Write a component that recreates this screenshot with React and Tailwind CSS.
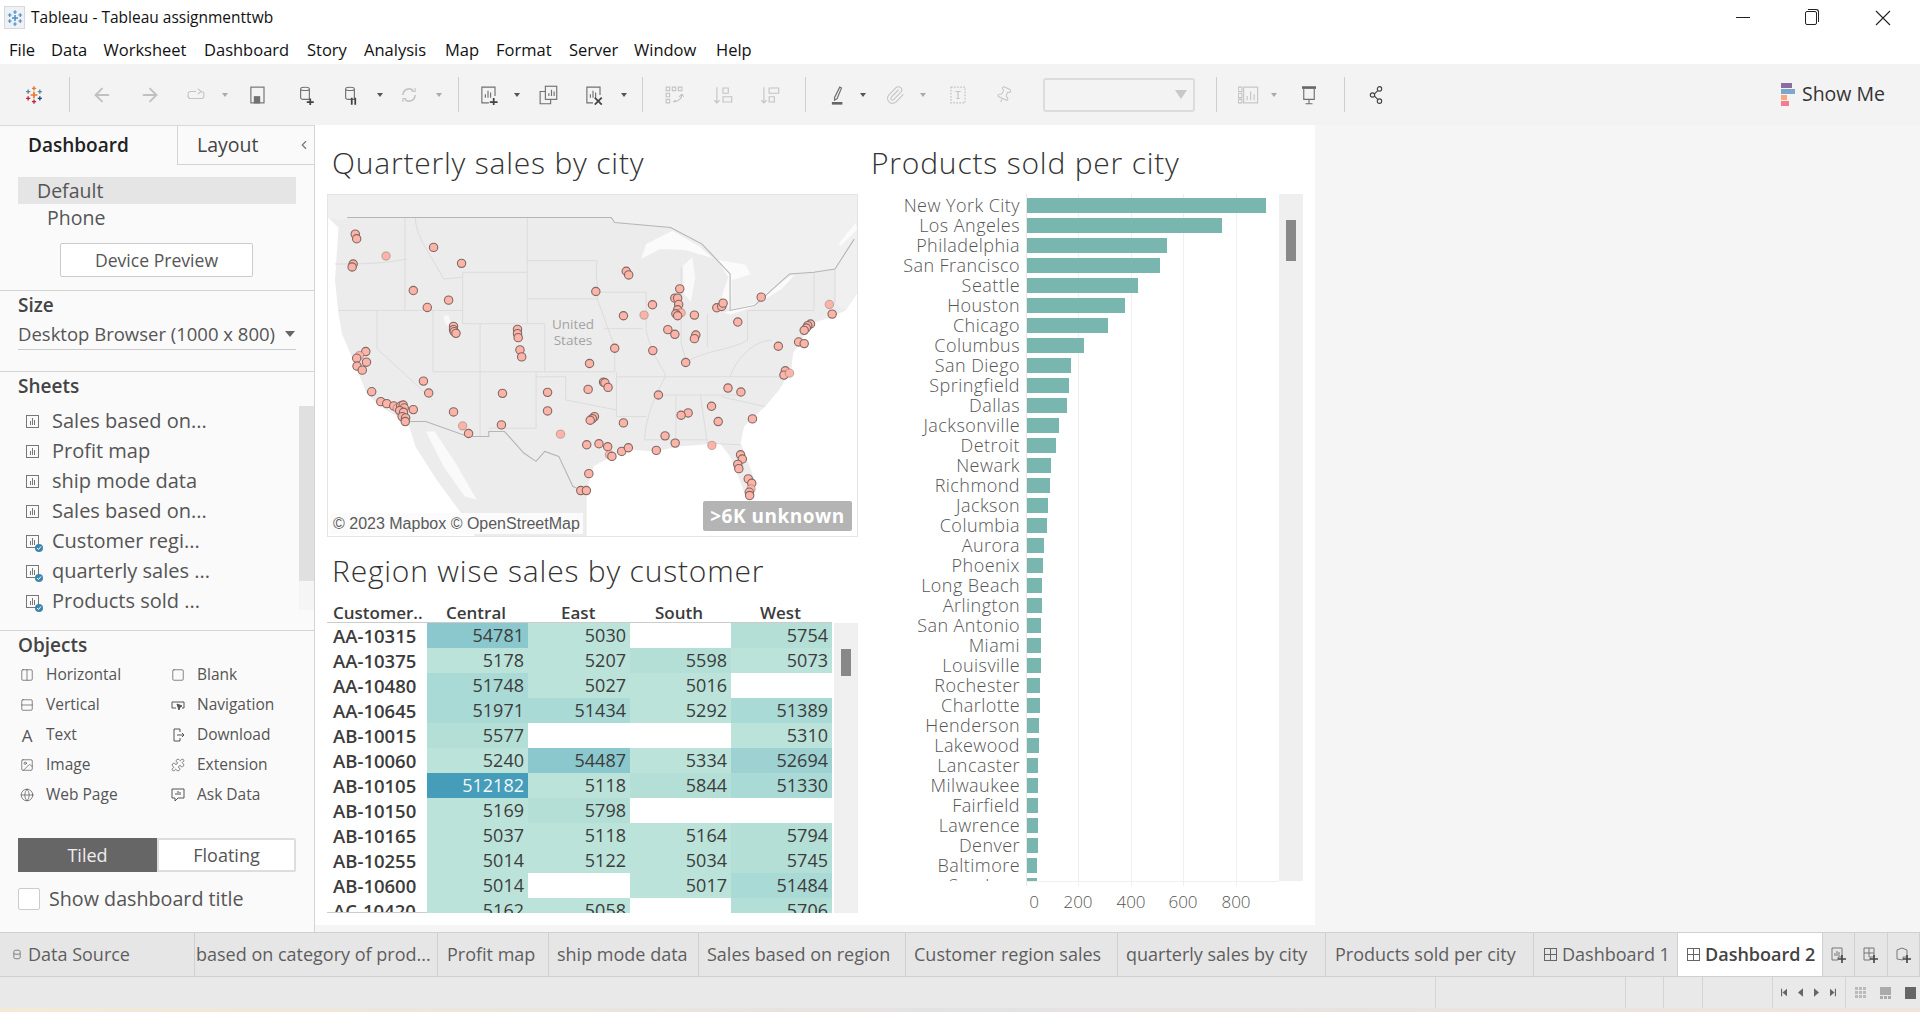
import React from "react";
import { ArrowLeft, ArrowRight, Columns2, Rows2, Image, Globe, Square, Puzzle, Paperclip, Pin, ChevronLeft } from "lucide-react";

const cities = [
  ["New York City", "w-[239px]"], ["Los Angeles", "w-[195px]"], ["Philadelphia", "w-[140px]"], ["San Francisco", "w-[133px]"],
  ["Seattle", "w-[111px]"], ["Houston", "w-[98px]"], ["Chicago", "w-[81px]"], ["Columbus", "w-[57px]"], ["San Diego", "w-[44px]"],
  ["Springfield", "w-[42px]"], ["Dallas", "w-[40px]"], ["Jacksonville", "w-[32px]"], ["Detroit", "w-[29px]"], ["Newark", "w-[24px]"],
  ["Richmond", "w-[23px]"], ["Jackson", "w-[21px]"], ["Columbia", "w-[20px]"], ["Aurora", "w-[17px]"], ["Phoenix", "w-[16px]"],
  ["Long Beach", "w-[15px]"], ["Arlington", "w-[15px]"], ["San Antonio", "w-[14px]"], ["Miami", "w-[14px]"], ["Louisville", "w-[14px]"],
  ["Rochester", "w-[13px]"], ["Charlotte", "w-[13px]"], ["Henderson", "w-[12px]"], ["Lakewood", "w-[12px]"], ["Lancaster", "w-[11px]"],
  ["Milwaukee", "w-[11px]"], ["Fairfield", "w-[11px]"], ["Lawrence", "w-[11px]"], ["Denver", "w-[11px]"], ["Baltimore", "w-[10px]"], ["San Jose", "w-[10px]"],
];

const customers = [
  ["AA-10315", 54781, 5030, null, 5754],
  ["AA-10375", 5178, 5207, 5598, 5073],
  ["AA-10480", 51748, 5027, 5016, null],
  ["AA-10645", 51971, 51434, 5292, 51389],
  ["AB-10015", 5577, null, null, 5310],
  ["AB-10060", 5240, 54487, 5334, 52694],
  ["AB-10105", 512182, 5118, 5844, 51330],
  ["AB-10150", 5169, 5798, null, null],
  ["AB-10165", 5037, 5118, 5164, 5794],
  ["AB-10255", 5014, 5122, 5034, 5745],
  ["AB-10600", 5014, null, 5017, 51484],
  ["AC-10420", 5162, 5058, null, 5706],
];

const dots = [
  [98,160],[102,174],[92,250],[89,259],[186,226],[322,200],[402,248],[264,330],[365,359],[304,381],[379,438],[379,448],[381,454],[386,459],
  [128,514],[110,526],[102,534],[130,546],[103,558],[118,570],[293,603],[145,635],[308,639],[171,665],[188,671],[208,678],[218,685],[228,678],
  [235,675],[238,684],[225,692],[236,697],[264,689],[232,710],[242,714],[241,725],[379,696],[405,738],[422,761],[519,640],[516,735],[562,447],
  [562,460],[564,472],[569,509],[574,530],[648,637],[648,693],[685,763],[764,628],[768,550],[808,606],[812,608],[821,622],[840,504],[786,333],
  [873,272],[880,283],[865,406],[924,404],[948,373],[949,511],[992,448],[1012,462],[1043,547],[1026,325],[1012,353],[1020,353],[1023,372],
  [1020,388],[1030,397],[1015,400],[1020,406],[1068,404],[1072,464],[1068,475],[1132,382],[1146,378],[1150,368],[1192,425],[1259,350],[1454,372],
  [1462,401],[1400,431],[1392,436],[1388,443],[1382,450],[1366,485],[1382,490],[1308,498],[1328,572],[1324,585],[1340,579],[1164,624],[1201,636],
  [965,645],[1117,679],[1136,725],[1050,699],[1030,706],[1234,717],[984,768],[1013,790],[1118,797],[959,812],[865,729],[782,710],[776,716],[770,721],
  [760,795],[795,792],[820,801],[860,815],[879,804],[825,825],[832,830],[766,882],[743,933],[759,933],[1200,825],[1205,838],[1192,854],[1195,867],
  [1222,898],[1232,911],[1230,928],[1225,938],[1226,948],
];

const stateLines = [
  "M240 110V390", "M50 390H405", "M405 275V430", "M405 275H590", "M405 430H640", "M590 110V430", "M590 240H790", "M590 355H790",
  "M320 390V575", "M160 390V505L320 660", "M320 575H840", "M455 430V770", "M615 575V745", "M640 430V575", "M480 745H615", "M615 590H700V660L845 690",
  "M845 575V710H930", "M790 335H930", "M810 445H920", "M840 500V575", "M930 335V450", "M1030 260V490", "M1105 400V500", "M1220 390V480",
  "M1220 390H1410", "M845 590H1320", "M975 645H1200", "M1015 645V780", "M1085 645L1105 790", "M925 780H1105", "M1105 790L1200 795", "M1145 650L1270 680",
  "M790 240C780 300 800 330 790 355L840 500", "M270 110C270 170 320 230 350 295L405 290", "M930 450C950 540 980 560 985 590", "M985 590C960 640 930 700 925 780",
  "M1030 490L1045 545C1100 510 1170 510 1220 480", "M1170 590C1190 530 1240 480 1290 480", "M1410 275V390", "M1470 265V370", "M40 250C100 250 180 250 245 235",
];

function tone(v) {
  if (v > 500000) return "bg-[#459db9] text-[#f2f7f9]";
  if (v > 54000) return "bg-[#8bc8cd] text-[#3c3c3c]";
  if (v > 52000) return "bg-[#9dd1d2] text-[#3c3c3c]";
  if (v > 51000) return "bg-[#aadad5] text-[#3c3c3c]";
  if (v > 5500) return "bg-[#b4dfd6] text-[#3c3c3c]";
  return "bg-[#bbe3da] text-[#3c3c3c]";
}

const Plus = ({ x, y, s, c, w = 2 }) => (
  <path d={`M${x - s} ${y}H${x + s}M${x} ${y - s}V${y + s}`} stroke={c} strokeWidth={w} fill="none" />
);

const TableauLogo = ({ colors, className }) => (
  <svg viewBox="0 0 24 24" className={className}>
    <Plus x={12} y={12} s={4} c={colors[0]} />
    <Plus x={12} y={4} s={2.5} c={colors[0]} w={1.6} />
    <Plus x={12} y={20} s={2.5} c={colors[2]} w={1.6} />
    <Plus x={5} y={8} s={2.5} c={colors[1]} w={1.6} />
    <Plus x={19} y={8} s={2.5} c={colors[1]} w={1.6} />
    <Plus x={5} y={16} s={2.5} c={colors[2]} w={1.6} />
    <Plus x={19} y={16} s={2.5} c={colors[3]} w={1.6} />
  </svg>
);

const Ico = ({ className, children, stroke = "#707070" }) => (
  <svg viewBox="0 0 24 24" fill="none" stroke={stroke} strokeWidth="1.300" className={`w-6 h-6 p-[1.500px] shrink-0 ${className}`}>
    {children}
  </svg>
);

const Caret = ({ className, dark }) => (
  <span className={`w-2 flex justify-center shrink-0 ${className}`}>
    <span className={`w-0 h-0 border-l-[3px] border-r-[3px] border-t-[4px] border-l-transparent border-r-transparent ${dark ? "border-t-[#555]" : "border-t-[#aaa]"}`} />
  </span>
);

const Sep = ({ className }) => <span className={`w-px h-[35px] bg-[#cfcfcf] shrink-0 ${className}`} />;

const Cylinder = () => (
  <path d="M7 5C7 2.500 17 2.500 17 5V17H12C9 17 7 17 7 15ZM7 5C7 7.500 17 7.500 17 5" />
);

const Bars = () => <path d="M9 15V11M12 15V7M15 15V9" />;

function Toolbar() {
  return (
    <div className="h-[61px] bg-[#f3f3f3] flex items-center pl-[22px] pr-[35px] shrink-0">
      <TableauLogo className="w-6 h-6 p-[2px] shrink-0" colors={["#e8762c", "#5b879b", "#c72037", "#1f447d"]} />
      <Sep className="ml-[23px]" />
      <ArrowLeft size={22} color="#c0c0c0" strokeWidth={2} className="ml-[21px] mr-[1px] shrink-0" />
      <ArrowRight size={22} color="#c0c0c0" strokeWidth={2} className="ml-[25px] mr-[1px] shrink-0" />
      <Ico className="ml-[22px]" stroke="#c4c4c4"><path d="M12 8H6C4 8 3 9 3 11V13C3 15 4 16 6 16H17C20 16 21 15 21 13V11C21 9 20 8 17 8M14 5L18 8L14 11" /></Ico>
      <Caret className="ml-[13px]" />
      <Ico className="ml-[16px]"><rect x="5" y="3" width="15" height="18" /><rect x="9" y="14" width="6" height="7" fill="#707070" /></Ico>
      <Ico className="ml-[24px]"><Cylinder /><path d="M14 20H22M18 16V24" stroke="#444" strokeWidth="2" /></Ico>
      <Ico className="ml-[21px]"><Cylinder /><path d="M14 15V23M18 15V23" stroke="#444" strokeWidth="2" /></Ico>
      <Caret className="ml-[14px]" dark />
      <Ico className="ml-[13px]" stroke="#c4c4c4"><path d="M5 12C5 8 8 5 12 5C14 5 16 6 17 7M19 12C19 16 16 19 12 19C10 19 8 18 7 17" strokeWidth="1.800" /><path d="M15 8H19V4M9 16H5V20" /></Ico>
      <Caret className="ml-[14px]" />
      <Sep className="ml-[15px]" />
      <Ico className="ml-[17px]"><path d="M20 13V3H5V21H13" /><Bars /><path d="M14 20H23M18.500 15.500V24" stroke="#444" strokeWidth="2" /></Ico>
      <Caret className="ml-[13px]" dark />
      <Ico className="ml-[15px]"><rect x="9" y="2" width="13" height="15" /><path d="M13 13V10M16 13V6M19 13V8" /><path d="M9 8H3V22H15V17" /></Ico>
      <Ico className="ml-[21px]"><path d="M20 12V3H5V21H12" /><Bars /><path d="M14 15L22 23M22 15L14 23" stroke="#444" strokeWidth="2" /></Ico>
      <Caret className="ml-[15px]" dark />
      <Sep className="ml-[14px]" />
      <Ico className="ml-[19px]" stroke="#c4c4c4"><path d="M3 3H7V7H3ZM10 3H14V7H10ZM17 3H21V7H17ZM3 10H7V14H3ZM3 17H7V21H3Z" /><path d="M21 11C21 16 17 20 11 20M21 11L18 14M21 11L23 14M11 20L14 18" /></Ico>
      <Ico className="ml-[25px]" stroke="#c4c4c4"><path d="M5 3V21M2 18L5 21L8 18" /><path d="M12 4H18V10H12ZM12 14H22V20H12Z" /></Ico>
      <Ico className="ml-[23px]" stroke="#c4c4c4"><path d="M5 3V21M2 18L5 21L8 18" /><path d="M11 4H22V10H11ZM11 14H17V20H11Z" /></Ico>
      <Sep className="ml-[23px]" />
      <Ico className="ml-[20px]"><path d="M8 15L14 3L16 4L11 16L8 18Z" /><rect x="5" y="20" width="12" height="3" fill="#666" stroke="none" /></Ico>
      <Caret className="ml-[9px]" dark />
      <Paperclip size={20} color="#c4c4c4" strokeWidth={1.3} className="ml-[18px] mr-[2px] shrink-0" />
      <Caret className="ml-[12px]" />
      <Ico className="ml-[19px]" stroke="#c4c4c4"><rect x="4" y="3" width="16" height="18" strokeDasharray="2 1.500" /><path d="M9 8H15M12 8V16M10 16H14" /></Ico>
      <Pin size={18} color="#c4c4c4" strokeWidth={1.3} className="ml-[25px] mr-[3px] shrink-0 rotate-[25deg]" />
      <div className="ml-[27px] w-[152px] h-[34px] border-2 border-[#dcdcdc] rounded-[3px] bg-[#f3f3f3] flex items-center justify-end pr-[6px] shrink-0">
        <span className="w-0 h-0 border-l-[6px] border-r-[6px] border-t-[9px] border-l-transparent border-r-transparent border-t-[#c8c8c8]" />
      </div>
      <Sep className="ml-[21px]" />
      <Ico className="ml-[19px]" stroke="#c4c4c4"><rect x="7" y="3" width="16" height="18" /><path d="M1 3H5V8H1ZM1 10H5V15H1ZM1 17H5V21H1Z" /><path d="M11 18V13M15 18V8M19 18V11" /></Ico>
      <Caret className="ml-[10px]" />
      <Ico className="ml-[19px]"><path d="M6 5V17H18V5M12 17V22M8 22H16" /><rect x="4" y="2" width="16" height="3" fill="#666" stroke="none" /></Ico>
      <Sep className="ml-[23px]" />
      <Ico className="ml-[19px]" stroke="#444"><circle cx="16" cy="5" r="2.500" /><circle cx="8" cy="12" r="2.500" /><circle cx="16" cy="19" r="2.500" /><path d="M10 11L14 7M10 13L14 17" /></Ico>
      <div className="ml-auto flex items-center -mt-[1px]">
        <span className="flex flex-col gap-[1px] w-[14px]">
          <span className="h-[5px] w-[11px] bg-[#8c6d9f]" />
          <span className="h-[5px] w-[14px] bg-[#7ba7cc]" />
          <span className="h-[5px] w-[6px] bg-[#f6a97f]" />
          <span className="h-[5px] w-[8px] bg-[#f47c8c]" />
        </span>
        <span className="ml-[7px] text-[19.500px] text-[#333]">Show Me</span>
      </div>
    </div>
  );
}

const SheetIcon = ({ done }) => (
  <span className="relative w-[13px] h-[13px] border border-[#777] flex items-end justify-center gap-[1px] pb-[2px] shrink-0">
    <span className="w-px h-[4px] bg-[#777]" />
    <span className="w-px h-[7px] bg-[#777]" />
    <span className="w-px h-[5px] bg-[#777]" />
    {done && (
      <span className="absolute -right-[5px] -bottom-[5px] w-[8px] h-[8px] rounded-full bg-[#3d85ad] flex items-center justify-center">
        <svg viewBox="0 0 8 8" className="w-[8px] h-[8px]" fill="none" stroke="#fff" strokeWidth="1"><path d="M2 4L3.500 5.500L6 2.500" /></svg>
      </span>
    )}
  </span>
);

const ObjectItem = ({ icon, label }) => (
  <div className="flex items-center h-[30px]">
    <span className="w-[14px] h-[14px] flex items-center justify-center text-[#555] shrink-0">{icon}</span>
    <span className="ml-[12px] text-[15.500px] text-[#555]">{label}</span>
  </div>
);

function Sidebar() {
  const small = { size: 14, strokeWidth: 1.2 };
  return (
    <aside className="w-[315px] h-full bg-[#fafafa] border-r border-[#d4d4d4] border-t border-t-[#d9d9d9] shrink-0 flex flex-col text-[#555]">
      <div className="flex h-[39px] shrink-0">
        <div className="w-[177px] pl-[28px] flex items-center text-[19px] font-semibold text-[#222]">Dashboard</div>
        <div className="flex-1 border-l border-b border-[#d4d4d4] flex items-center pl-[19px] text-[19.500px] text-[#444] relative">
          Layout
          <ChevronLeft size={14} color="#777" className="absolute right-[3px] top-[12px]" />
        </div>
      </div>
      <div className="mt-[12px] mx-[18px] h-[27px] bg-[#e5e5e5] pl-[19px] flex items-center text-[19.500px]">Default</div>
      <div className="mx-[18px] h-[27px] pl-[29px] flex items-center text-[19.500px]">Phone</div>
      <button className="mt-[12px] ml-[60px] w-[193px] h-[34px] bg-white border border-[#ccc] rounded-[2px] text-[17.600px] text-[#555]">Device Preview</button>
      <div className="mt-[13px] border-t border-[#d4d4d4] px-[18px] h-[81px] shrink-0">
        <div className="pt-[1px] text-[19px] font-semibold text-[#444] leading-[26px]">Size</div>
        <div className="mt-[1px] h-[31px] border-b border-[#ccc] flex items-center justify-between text-[18.500px]">
          <span>Desktop Browser (1000 x 800)</span>
          <span className="mr-[1px] w-0 h-0 border-l-[5px] border-r-[5px] border-t-[6px] border-l-transparent border-r-transparent border-t-[#666]" />
        </div>
      </div>
      <div className="border-t border-[#d4d4d4] h-[259px] shrink-0 flex flex-col">
        <div className="pl-[18px] pt-[1px] text-[19px] font-semibold text-[#444] leading-[26px]">Sheets</div>
        <div className="mt-[7px] flex relative">
          <div className="flex-1 pl-[26px]">
            {[["Sales based on...", 0], ["Profit map", 0], ["ship mode data", 0], ["Sales based on...", 0], ["Customer regi...", 1], ["quarterly sales ...", 1], ["Products sold ...", 1]].map(([name, done], i) => (
              <div key={i} className="h-[30px] flex items-center">
                <SheetIcon done={!!done} />
                <span className="ml-[13px] text-[20px]">{name}</span>
              </div>
            ))}
          </div>
          <div className="w-[15px] h-[204px] bg-[#f5f5f5]"><div className="h-[175px] bg-[#e0e0e0]" /></div>
        </div>
      </div>
      <div className="border-t border-[#d4d4d4] flex-1 px-[20px] relative">
        <div className="-ml-[2px] pt-[1px] text-[19px] font-semibold text-[#444] leading-[26px]">Objects</div>
        <div className="mt-[2px] grid grid-cols-[151px_1fr]">
          <ObjectItem icon={<Columns2 {...small} />} label="Horizontal" />
          <ObjectItem icon={<Square {...small} />} label="Blank" />
          <ObjectItem icon={<Rows2 {...small} />} label="Vertical" />
          <ObjectItem icon={<svg viewBox="0 0 14 14" className="w-[14px] h-[14px]" fill="none" stroke="#555" strokeWidth="1"><path d="M5 10H1V4H13V10H11" /><path d="M6 6L11 8L9 9L8 12Z" fill="#555" /></svg>} label="Navigation" />
          <ObjectItem icon={<span className="text-[17px] leading-none">A</span>} label="Text" />
          <ObjectItem icon={<svg viewBox="0 0 14 14" className="w-[14px] h-[14px]" fill="none" stroke="#555" strokeWidth="1"><path d="M9 4V1H3V13H9V10M6 7H13M11 5L13 7L11 9" /></svg>} label="Download" />
          <ObjectItem icon={<Image {...small} />} label="Image" />
          <ObjectItem icon={<Puzzle {...small} />} label="Extension" />
          <ObjectItem icon={<Globe {...small} />} label="Web Page" />
          <ObjectItem icon={<svg viewBox="0 0 14 14" className="w-[14px] h-[14px]" fill="none" stroke="#555" strokeWidth="1"><path d="M1 1H13V10H7L4 13V10H1ZM5 7V5M7 7V3M9 7V4" /></svg>} label="Ask Data" />
        </div>
        <div className="mt-[28px] -ml-[2px] flex h-[34px] w-[278px]">
          <div className="w-[139px] bg-[#666] text-[#eee] flex items-center justify-center text-[18px]">Tiled</div>
          <div className="w-[139px] bg-white border-2 border-[#ddd] rounded-r-[2px] flex items-center justify-center text-[18px]">Floating</div>
        </div>
        <label className="mt-[12px] -ml-[2px] flex items-center">
          <span className="w-[22px] h-[22px] bg-white border border-[#ccc] rounded-[2px]" />
          <span className="ml-[9px] text-[19.700px]">Show dashboard title</span>
        </label>
      </div>
    </aside>
  );
}

function MapView() {
  return (
    <div className="relative w-[531px] h-[343px] border border-[#e4e4e4] bg-white overflow-hidden shrink-0">
      <svg viewBox="20 42 1513 1028" preserveAspectRatio="none" className="w-full h-full block">
        <path d="M20 42H1533V340L1500 390L1460 410L1400 430L1380 470L1350 520L1345 570L1310 630L1270 680L1210 740L1200 790L1215 830L1240 900L1235 950L1215 950L1190 880L1170 830L1140 790L1090 795L1020 800L960 815L880 810L830 830L780 860L760 930L760 1070H440L400 1000L330 900L270 800L250 730L170 680L130 640L100 560L60 460L50 400L40 300L50 140L20 110Z" fill="#ececec" />
        <path d="M20 42H830V110H75L60 120L20 110ZM830 42H1533V340L1500 390L1470 370V265L1340 280L1240 375L1170 390V280L1090 190L1000 140L840 125L830 110Z" fill="#f0f0f0" />
        <path d="M300 755L325 755L385 850L445 960L410 950L350 860Z" fill="#fafafa" />
        <path d="M930 190L1005 150L1080 195L1120 232L1040 208L970 205L915 235Z" fill="#fbfbfb" />
        <path d="M1035 255L1062 230L1070 290L1058 365L1038 340Z" fill="#f9f9f9" />
        <path d="M1135 238L1215 252L1228 282L1175 298L1172 392L1145 350L1165 290Z" fill="#fbfbfb" />
        <path d="M1152 396L1250 366L1245 376L1170 403Z" fill="#fbfbfb" />
        <path d="M1258 350L1340 288L1356 282L1318 325L1270 356Z" fill="#fbfbfb" />
        <path d="M1530 125L1480 190L1488 194L1533 145Z" fill="#fbfbfb" />
        <path d="M350 405L365 405L375 445L355 430Z" fill="#f8f8f8" />
        <g fill="none" stroke="#dcdcdc" strokeWidth="1">
          {stateLines.map((d, i) => <path key={i} d={d} vectorEffect="non-scaling-stroke" />)}
        </g>
        <path d="M75 110H830L840 125L1000 140L1090 190L1170 280L1170 390L1240 375L1340 280L1410 275L1470 265L1525 175" fill="none" stroke="#b5b5b5" strokeWidth="1.100" vectorEffect="non-scaling-stroke" />
        <path d="M250 725H300L420 770H480V755H525L580 820L615 845L640 815L680 830L720 920L760 940" fill="none" stroke="#b5b5b5" strokeWidth="1.100" vectorEffect="non-scaling-stroke" />
        {dots.map(([x, y], i) => (
          <ellipse key={i} cx={x} cy={y} rx="12" ry="12.500" fill="#fcb4a8" stroke="#7c625e" strokeWidth="1.100" strokeOpacity={i % 11 === 4 ? 0.4 : 0.95} vectorEffect="non-scaling-stroke" />
        ))}
      </svg>
      <div className="absolute left-[205px] top-[121px] w-[80px] text-center text-[13.500px] leading-[16px] text-[#a3a3a3]">United<br />States</div>
      <div className="absolute left-[2px] bottom-[2px] h-[21px] w-[253px] bg-[#fbfbfb] flex items-center pl-[3px] text-[16px] text-[#5a5a5a] font-['Liberation_Sans',sans-serif]">© 2023 Mapbox © OpenStreetMap</div>
      <div className="absolute right-[5px] bottom-[5px] h-[30px] w-[149px] rounded-[2px] bg-[#b4b4b4] flex items-center justify-center text-[19px] font-bold text-white tracking-[0.5px]">&gt;6K unknown</div>
    </div>
  );
}

function CrossTab() {
  return (
    <div className="relative shrink-0">
      <div className="flex h-[24px] pt-[4px] w-[505px] border-b border-[#ccc] text-[17px] font-semibold text-[#3c3c3c] items-center">
        <span className="w-[100px] pl-[6px] whitespace-nowrap">Customer..</span>
        <span className="w-[101px] pl-[19px]">Central</span>
        <span className="w-[102px] pl-[33px]">East</span>
        <span className="w-[101px] pl-[25px]">South</span>
        <span className="w-[101px] pl-[29px]">West</span>
      </div>
      <div className="flex">
        <div className="relative w-[505px] h-[290px] overflow-hidden">
          {customers.map(([id, ...vals]) => (
            <div key={id} className="grid grid-cols-[100px_101px_102px_101px_101px] h-[25px] text-[18px] leading-[25px]">
              <span className="pl-[6px] font-semibold text-[#3c3c3c] text-[18.500px]">{id}</span>
              {vals.map((v, i) => (
                <span key={i} className={`text-right pr-[4px] ${v ? tone(v) : "bg-white"}`}>{v}</span>
              ))}
            </div>
          ))}
          <span className="absolute left-0 bottom-0 w-[100px] h-px bg-[#ccc]" />
        </div>
        <div className="ml-[2px] w-[24px] h-[290px] bg-[#f0f0f0] pt-[26px] pl-[7px]">
          <div className="w-[10px] h-[27px] bg-[#888]" />
        </div>
      </div>
    </div>
  );
}

function BarChart() {
  return (
    <div className="relative h-[715px] w-[443px]">
      <div className="relative h-[692px]">
        <span className="absolute left-[166px] top-0 bottom-0 w-px bg-[#e8e8e8]" />
        <span className="absolute left-[218px] top-0 bottom-0 w-px bg-[#efefef]" />
        <span className="absolute left-[271px] top-0 bottom-0 w-px bg-[#efefef]" />
        <span className="absolute left-[323px] top-0 bottom-0 w-px bg-[#efefef]" />
        <span className="absolute left-[376px] top-0 bottom-0 w-px bg-[#efefef]" />
        <span className="absolute left-[166px] top-[687px] w-[253px] h-px bg-[#efefef]" />
        <div className="relative h-[687px] w-[419px] overflow-hidden pt-[1px]">
          {cities.map(([name, w]) => (
            <div key={name} className="flex items-center h-[20px]">
              <span className="w-[160px] text-right text-[18px] tracking-[0.45px] font-light text-[#555] whitespace-nowrap leading-[20px]">{name}</span>
              <span className={`ml-[7px] h-[15px] bg-[#79b6af] ${w}`} />
            </div>
          ))}
        </div>
        <div className="absolute left-[419px] top-0 w-[24px] h-[687px] bg-[#efefef] pl-[7px] pt-[26px]">
          <div className="w-[10px] h-[41px] bg-[#888]" />
        </div>
      </div>
      <div className="flex pl-[154px] text-[17px] font-light text-[#555] leading-[20px] mt-[6px]">
        <span className="w-[40px] text-center">0</span>
        <span className="ml-[4px] w-[40px] text-center">200</span>
        <span className="ml-[13px] w-[40px] text-center">400</span>
        <span className="ml-[12px] w-[40px] text-center">600</span>
        <span className="ml-[13px] w-[40px] text-center">800</span>
      </div>
    </div>
  );
}

const titleClass = "text-[30px] font-light text-[#333] tracking-[0.8px] leading-[36px]";

function Dashboard() {
  return (
    <div className="flex-1 h-full bg-[#f5f5f5]">
      <div className="w-[1000px] h-[800px] bg-white pl-[12px] flex">
        <div className="w-[533px] flex flex-col">
          <div className={`${titleClass} pl-[5px] h-[69px] pt-[20px] shrink-0`}>Quarterly sales by city</div>
          <MapView />
          <div className={`${titleClass} pl-[5px] h-[62px] pt-[16px] shrink-0`}>Region wise sales by customer</div>
          <CrossTab />
        </div>
        <div className="w-[455px] flex flex-col">
          <div className={`${titleClass} pl-[11px] h-[69px] pt-[20px] shrink-0`}>Products sold per city</div>
          <BarChart />
        </div>
      </div>
    </div>
  );
}

const Tab = ({ w, children, active }) => (
  <div className={`${w} shrink-0 h-full border-r border-[#d0d0d0] flex items-center overflow-hidden whitespace-nowrap text-[18px] ${active ? "bg-white font-semibold text-[#444]" : "text-[#5e5e5e]"}`}>
    {children}
  </div>
);

const DashIcon = () => (
  <span className="mr-[5px] w-[13px] h-[13px] border border-[#666] grid grid-cols-2 shrink-0">
    <span className="border-r border-b border-[#666]" />
    <span className="border-b border-[#666]" />
    <span className="border-r border-[#666]" />
    <span />
  </span>
);

const TabAdd = ({ w, kind }) => (
  <div className={`${w} shrink-0 h-full border-r border-[#d0d0d0] flex items-center justify-center`}>
    <svg viewBox="0 0 18 18" className="w-[18px] h-[18px]" fill="none" stroke="#777" strokeWidth="1">
      {kind === 0 && <path d="M2 2H12V11H8V14H2ZM5 10V7M7 10V5M9 10V6" />}
      {kind === 1 && <path d="M2 2H12V11H8V14H2ZM7 2V11M2 7H12" />}
      {kind === 2 && <path d="M2 4L7 2L12 4V11H8V14L2 13Z" />}
      <path d="M8 13H16M12 9V17" stroke="#444" strokeWidth="1.600" />
    </svg>
  </div>
);

function BottomBars() {
  return (
    <>
      <div className="h-[45px] border-t border-b border-[#d0d0d0] bg-[#e6e6e6] flex shrink-0">
        <Tab w="w-[195px]">
          <svg viewBox="0 0 10 14" className="ml-[13px] mr-[7px] w-[8px] h-[11px]" fill="none" stroke="#666"><path d="M1 3C1 1 9 1 9 3V11C9 13 1 13 1 11ZM1 6C3 7 7 7 9 6" /></svg>
          Data Source
        </Tab>
        <Tab w="w-[243px]"><span className="pl-[1px]">based on category of prod...</span></Tab>
        <Tab w="w-[111px]"><span className="pl-[9px]">Profit map</span></Tab>
        <Tab w="w-[150px]"><span className="pl-[8px]">ship mode data</span></Tab>
        <Tab w="w-[207px]"><span className="pl-[8px]">Sales based on region</span></Tab>
        <Tab w="w-[212px]"><span className="pl-[8px]">Customer region sales</span></Tab>
        <Tab w="w-[208px]"><span className="pl-[8px]">quarterly sales by city</span></Tab>
        <Tab w="w-[208px]"><span className="pl-[9px]">Products sold per city</span></Tab>
        <Tab w="w-[144px]"><span className="pl-[10px]" /><DashIcon />Dashboard 1</Tab>
        <Tab w="w-[145px]" active><span className="pl-[9px]" /><DashIcon />Dashboard 2</Tab>
        <TabAdd w="w-[32px]" kind={0} />
        <TabAdd w="w-[33px]" kind={1} />
        <TabAdd w="w-[32px]" kind={2} />
      </div>
      <div className="h-[31px] bg-[#e9e9e9] flex shrink-0">
        <div className="w-[1436px] border-r border-[#d4d4d4]" />
        <div className="w-[190px] border-r border-[#d4d4d4]" />
        <div className="w-[38px] border-r border-[#d4d4d4]" />
        <div className="w-[39px] border-r border-[#d4d4d4]" />
        <div className="w-[70px] border-r border-[#d4d4d4]" />
        <div className="w-[73px] border-r border-[#d4d4d4] flex items-center gap-[11px] pl-[8px]">
          <svg viewBox="0 0 8 10" className="w-[6px] h-[9px]" fill="#666"><path d="M0 0H1.500V10H0ZM8 0V10L2 5Z" /></svg>
          <svg viewBox="0 0 6 10" className="w-[5px] h-[9px]" fill="#666"><path d="M6 0V10L0 5Z" /></svg>
          <svg viewBox="0 0 6 10" className="w-[5px] h-[9px]" fill="#666"><path d="M0 0V10L6 5Z" /></svg>
          <svg viewBox="0 0 8 10" className="w-[6px] h-[9px]" fill="#666"><path d="M8 0H6.500V10H8ZM0 0V10L6 5Z" /></svg>
        </div>
        <div className="flex-1 flex items-center gap-[14px] pl-[9px]">
          <svg viewBox="0 0 11 12" className="w-[11px] h-[12px]" fill="#bbb"><path d="M0 0H3V3H0ZM4 0H7V3H4ZM8 0H11V3H8ZM0 4H3V7H0ZM4 4H7V7H4ZM8 4H11V7H8ZM0 8H3V11H0ZM4 8H7V11H4ZM8 8H11V11H8Z" /></svg>
          <svg viewBox="0 0 11 12" className="w-[11px] h-[12px]" fill="#aaa"><path d="M0 0H11V8H0ZM0 9H3V12H0ZM4 9H7V12H4ZM8 9H11V12H8Z" /></svg>
          <span className="w-[11px] h-[12px] bg-[#666]" />
        </div>
      </div>
      <div className="h-[4px] bg-linear-to-r from-[#f3ead6] via-[#e4e2e2] to-[#efe4dc] shrink-0" />
    </>
  );
}

export default function App() {
  return (
    <div className="w-[1920px] h-[1012px] overflow-hidden bg-white flex flex-col font-['Open_Sans',sans-serif]">
      <div className="h-[35px] flex items-center pl-[4px] shrink-0">
        <span className="w-[21px] h-[23px] bg-[#eef1f5] border border-[#d8d8d8] flex items-center justify-center">
          <TableauLogo className="w-[18px] h-[18px]" colors={["#4a90c2", "#4a90c2", "#4a90c2", "#4a90c2"]} />
        </span>
        <span className="ml-[6px] text-[15.500px] text-[#111]">Tableau - Tableau assignmenttwb</span>
        <div className="ml-auto flex items-center pr-[29px] text-[#111]">
          <span className="w-[14px] h-px bg-[#222]" />
          <span className="ml-[55px] relative w-[12px] h-[14px] border border-[#222] rounded-[2px] after:absolute after:-top-[3px] after:-right-[3px] after:w-[11px] after:h-[13px] after:border-t after:border-r after:border-[#222] after:rounded-tr-[3px]" />
          <svg viewBox="0 0 16 16" className="ml-[58px] w-[16px] h-[16px]" stroke="#222" strokeWidth="1.100"><path d="M1 1L15 15M15 1L1 15" /></svg>
        </div>
      </div>
      <div className="h-[29px] pt-[1px] flex items-center pl-[9px] text-[16.500px] text-[#111] shrink-0">
        <span className="w-[42px]">File</span>
        <span className="w-[52.500px]">Data</span>
        <span className="w-[100.500px]">Worksheet</span>
        <span className="w-[103px]">Dashboard</span>
        <span className="w-[57px]">Story</span>
        <span className="w-[81px]">Analysis</span>
        <span className="w-[51px]">Map</span>
        <span className="w-[73px]">Format</span>
        <span className="w-[65px]">Server</span>
        <span className="w-[82px]">Window</span>
        <span>Help</span>
      </div>
      <Toolbar />
      <div className="h-[807px] flex shrink-0">
        <Sidebar />
        <Dashboard />
      </div>
      <BottomBars />
    </div>
  );
}
